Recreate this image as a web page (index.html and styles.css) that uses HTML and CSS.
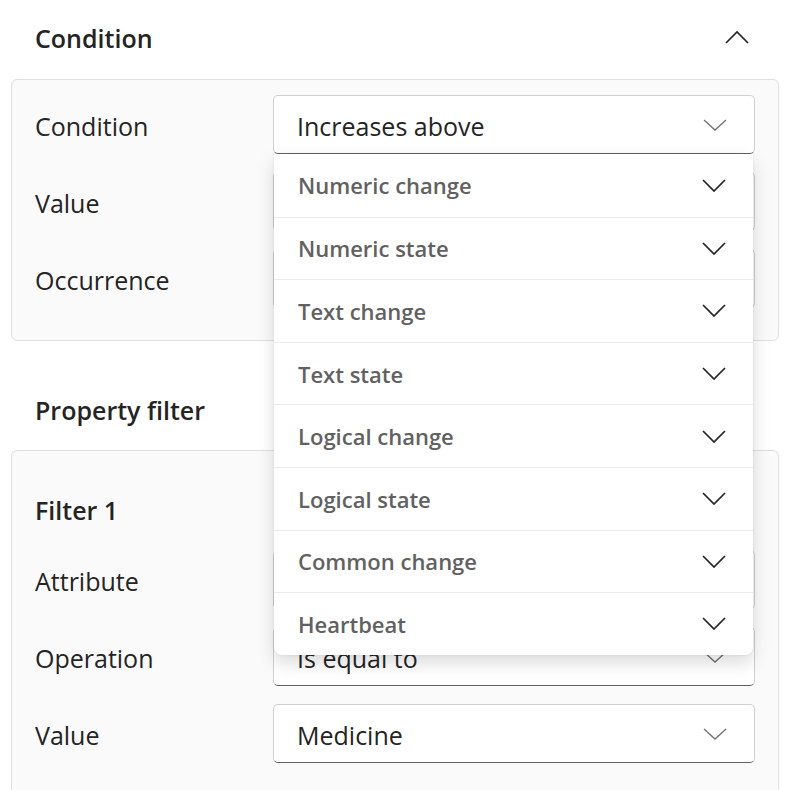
FILE: index.html
```html
<!DOCTYPE html>
<html lang="en">
<head>
<meta charset="utf-8">
<title>Condition</title>
<link rel="stylesheet" href="styles.css">
</head>
<body>
<div class="panel">
  <div class="section-head">
    <h2 class="section-title">Condition</h2>
    <svg class="collapse-icon" width="24" height="14" viewBox="0 0 24 14"><path d="M1 13 L12 2 L23 13" fill="none" stroke="#242424" stroke-width="1.6"/></svg>
  </div>
  <div class="card card-condition">
    <div class="row">
      <span class="label">Condition</span>
      <div class="select-wrap">
        <div class="select"><span class="select-text">Increases above</span>
          <svg class="chev" width="24" height="12" viewBox="0 0 24 12"><path d="M1 1 L12 11 L23 1" fill="none" stroke="#707070" stroke-width="1.3"/></svg>
        </div>
        <ul class="dropdown">
          <li class="option"><span>Numeric change</span><svg class="chev-dark" width="24" height="13" viewBox="0 0 24 13"><path d="M1 1 L12 12 L23 1" fill="none" stroke="#242424" stroke-width="1.7"/></svg></li>
          <li class="option"><span>Numeric state</span><svg class="chev-dark" width="24" height="13" viewBox="0 0 24 13"><path d="M1 1 L12 12 L23 1" fill="none" stroke="#242424" stroke-width="1.7"/></svg></li>
          <li class="option"><span>Text change</span><svg class="chev-dark" width="24" height="13" viewBox="0 0 24 13"><path d="M1 1 L12 12 L23 1" fill="none" stroke="#242424" stroke-width="1.7"/></svg></li>
          <li class="option"><span>Text state</span><svg class="chev-dark" width="24" height="13" viewBox="0 0 24 13"><path d="M1 1 L12 12 L23 1" fill="none" stroke="#242424" stroke-width="1.7"/></svg></li>
          <li class="option"><span>Logical change</span><svg class="chev-dark" width="24" height="13" viewBox="0 0 24 13"><path d="M1 1 L12 12 L23 1" fill="none" stroke="#242424" stroke-width="1.7"/></svg></li>
          <li class="option"><span>Logical state</span><svg class="chev-dark" width="24" height="13" viewBox="0 0 24 13"><path d="M1 1 L12 12 L23 1" fill="none" stroke="#242424" stroke-width="1.7"/></svg></li>
          <li class="option"><span>Common change</span><svg class="chev-dark" width="24" height="13" viewBox="0 0 24 13"><path d="M1 1 L12 12 L23 1" fill="none" stroke="#242424" stroke-width="1.7"/></svg></li>
          <li class="option"><span>Heartbeat</span><svg class="chev-dark" width="24" height="13" viewBox="0 0 24 13"><path d="M1 1 L12 12 L23 1" fill="none" stroke="#242424" stroke-width="1.7"/></svg></li>
        </ul>
      </div>
    </div>
    <div class="row">
      <span class="label">Value</span>
      <div class="select plain-input"></div>
    </div>
    <div class="row">
      <span class="label">Occurrence</span>
      <div class="select">
        <svg class="chev" width="24" height="12" viewBox="0 0 24 12"><path d="M1 1 L12 11 L23 1" fill="none" stroke="#707070" stroke-width="1.3"/></svg>
      </div>
    </div>
  </div>

  <div class="section-head section-head-second">
    <h2 class="section-title">Property filter</h2>
  </div>
  <div class="card card-filter">
    <h3 class="filter-title">Filter 1</h3>
    <div class="row">
      <span class="label">Attribute</span>
      <div class="select">
        <svg class="chev" width="24" height="12" viewBox="0 0 24 12"><path d="M1 1 L12 11 L23 1" fill="none" stroke="#707070" stroke-width="1.3"/></svg>
      </div>
    </div>
    <div class="row">
      <span class="label">Operation</span>
      <div class="select"><span class="select-text">Is equal to</span>
        <svg class="chev" width="24" height="12" viewBox="0 0 24 12"><path d="M1 1 L12 11 L23 1" fill="none" stroke="#707070" stroke-width="1.3"/></svg>
      </div>
    </div>
    <div class="row">
      <span class="label">Value</span>
      <div class="select"><span class="select-text">Medicine</span>
        <svg class="chev" width="24" height="12" viewBox="0 0 24 12"><path d="M1 1 L12 11 L23 1" fill="none" stroke="#707070" stroke-width="1.3"/></svg>
      </div>
    </div>
  </div>
</div>
</body>
</html>
```
FILE: styles.css
```css
* { box-sizing: border-box; }
html, body { margin: 0; padding: 0; background: #ffffff; }
body {
  font-family: "Open Sans", "Noto Sans", "Liberation Sans", sans-serif;
  color: #242424;
  overflow: hidden;
  height: 790px;
}
.panel { width: 789px; }

.section-head {
  height: 79px;
  display: flex;
  align-items: center;
  justify-content: space-between;
  padding: 0 40px 4px 35px;
}
.section-head-second { margin-top: 30px; padding-bottom: 2px; }
.section-title {
  margin: 0;
  font-size: 25px;
  font-weight: 600;
  line-height: 32px;
}
.collapse-icon { display: block; margin-top: -2px; }

.card {
  margin: 0 10px 0 11px;
  border: 1px solid #e0e0e0;
  border-radius: 6px;
  background: #fafafa;
  padding: 15px 23px 32px 23px;
}
.card-filter { padding-top: 28px; height: 400px; }

.filter-title {
  margin: 0 0 9px 0;
  font-size: 25px;
  font-weight: 600;
  line-height: 62px;
}

.row {
  display: grid;
  grid-template-columns: 238px 1fr;
  align-items: center;
  height: 59px;
  margin-bottom: 18px;
}
.row:last-child { margin-bottom: 0; }

.label {
  font-size: 25px;
  line-height: 32px;
  padding-top: 2px;
}

.select-wrap { position: relative; }
.select {
  height: 59px;
  background: #ffffff;
  border: 1px solid #d1d1d1;
  border-bottom-color: #616161;
  border-radius: 5px;
  display: flex;
  align-items: center;
  justify-content: space-between;
  padding: 0 27px 0 23px;
}
.select .chev { margin-left: auto; }
.select-text { font-size: 25px; line-height: 32px; color: #242424; padding-top: 2px; }
.chev { display: block; }

.dropdown {
  position: absolute;
  top: 59px;
  left: 1px;
  right: 2px;
  margin: 0;
  padding: 0;
  list-style: none;
  background: #ffffff;
  border-radius: 0 0 8px 8px;
  box-shadow: 0 8px 18px rgba(0, 0, 0, 0.14), 0 0 3px rgba(0, 0, 0, 0.08);
  z-index: 5;
}
.option {
  height: 62.6px;
  display: flex;
  align-items: center;
  justify-content: space-between;
  padding: 0 27px 0 24px;
  font-size: 22px;
  font-weight: 600;
  color: #616161;
}
.option + .option { border-top: 1px solid #ececec; }
.chev-dark { display: block; }
```
